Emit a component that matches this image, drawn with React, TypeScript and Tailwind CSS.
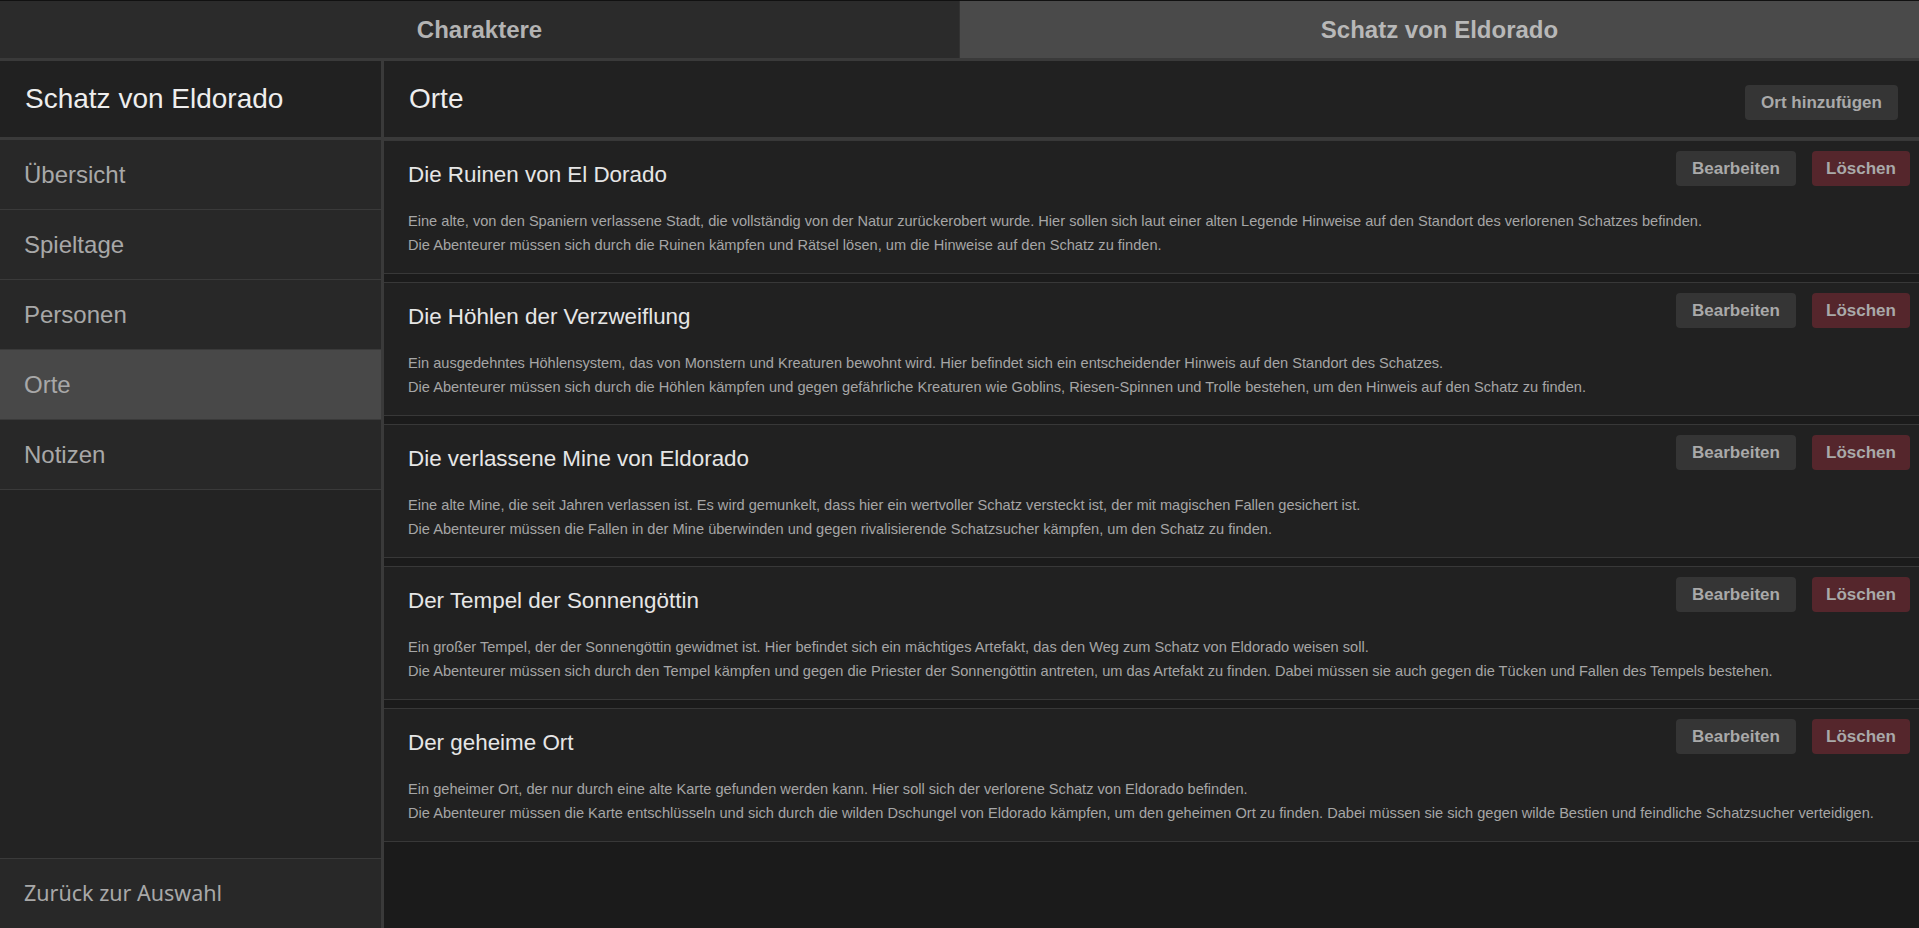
import React from "react";

type Place = {
  title: string;
  lines: string[];
};

const places: Place[] = [
  {
    title: "Die Ruinen von El Dorado",
    lines: [
      "Eine alte, von den Spaniern verlassene Stadt, die vollständig von der Natur zurückerobert wurde. Hier sollen sich laut einer alten Legende Hinweise auf den Standort des verlorenen Schatzes befinden.",
      "Die Abenteurer müssen sich durch die Ruinen kämpfen und Rätsel lösen, um die Hinweise auf den Schatz zu finden.",
    ],
  },
  {
    title: "Die Höhlen der Verzweiflung",
    lines: [
      "Ein ausgedehntes Höhlensystem, das von Monstern und Kreaturen bewohnt wird. Hier befindet sich ein entscheidender Hinweis auf den Standort des Schatzes.",
      "Die Abenteurer müssen sich durch die Höhlen kämpfen und gegen gefährliche Kreaturen wie Goblins, Riesen-Spinnen und Trolle bestehen, um den Hinweis auf den Schatz zu finden.",
    ],
  },
  {
    title: "Die verlassene Mine von Eldorado",
    lines: [
      "Eine alte Mine, die seit Jahren verlassen ist. Es wird gemunkelt, dass hier ein wertvoller Schatz versteckt ist, der mit magischen Fallen gesichert ist.",
      "Die Abenteurer müssen die Fallen in der Mine überwinden und gegen rivalisierende Schatzsucher kämpfen, um den Schatz zu finden.",
    ],
  },
  {
    title: "Der Tempel der Sonnengöttin",
    lines: [
      "Ein großer Tempel, der der Sonnengöttin gewidmet ist. Hier befindet sich ein mächtiges Artefakt, das den Weg zum Schatz von Eldorado weisen soll.",
      "Die Abenteurer müssen sich durch den Tempel kämpfen und gegen die Priester der Sonnengöttin antreten, um das Artefakt zu finden. Dabei müssen sie auch gegen die Tücken und Fallen des Tempels bestehen.",
    ],
  },
  {
    title: "Der geheime Ort",
    lines: [
      "Ein geheimer Ort, der nur durch eine alte Karte gefunden werden kann. Hier soll sich der verlorene Schatz von Eldorado befinden.",
      "Die Abenteurer müssen die Karte entschlüsseln und sich durch die wilden Dschungel von Eldorado kämpfen, um den geheimen Ort zu finden. Dabei müssen sie sich gegen wilde Bestien und feindliche Schatzsucher verteidigen.",
    ],
  },
];

const navItems = ["Übersicht", "Spieltage", "Personen", "Orte", "Notizen"];

function PlaceCard({ place }: { place: Place }) {
  return (
    <div className="border-y border-[#383838] bg-[#212121] pt-[10px] pr-[9px] pb-4 pl-6">
      <div className="flex items-start justify-between">
        <h3 className="mt-[11px] text-[22.4px] leading-[26px] text-[#e6e6e6]">
          {place.title}
        </h3>
        <div className="flex gap-4">
          <button className="h-[35px] w-[120px] rounded bg-[#353535] text-[17px] font-bold text-[#a9a9a9]">
            Bearbeiten
          </button>
          <button className="h-[35px] w-[98px] rounded bg-[#55262c] text-[17px] font-bold text-[#a9a9a9]">
            Löschen
          </button>
        </div>
      </div>
      <div className="mt-[21px] text-[14.6px] leading-6 text-[#a6a6a6]">
        {place.lines.map((line) => (
          <p key={line}>{line}</p>
        ))}
      </div>
    </div>
  );
}

export default function App() {
  return (
    <div className="flex h-screen flex-col overflow-hidden bg-[#1b1b1b] font-['Liberation_Sans',Arial,sans-serif]">
      <div className="flex h-[61px] shrink-0 border-t border-b-[3px] border-t-[#111] border-b-[#3a3a3a]">
        <div className="flex flex-1 items-center justify-center border-r border-[#333] bg-[#2b2b2b] text-[24px] font-bold text-[#b3b3b3]">
          Charaktere
        </div>
        <div className="flex flex-1 items-center justify-center bg-[#4a4a4a] text-[24px] font-bold text-[#b8b8b8]">
          Schatz von Eldorado
        </div>
      </div>

      <div className="flex min-h-0 flex-1">
        <aside className="flex w-[384px] shrink-0 flex-col border-r-[3px] border-[#3a3a3a] bg-[#232323]">
          <div className="flex h-[79px] shrink-0 items-center border-b-[3px] border-[#3a3a3a] bg-[#212121] px-[25px] text-[28px] text-[#eee]">
            Schatz von Eldorado
          </div>
          {navItems.map((item) => (
            <div
              key={item}
              className={
                item === "Orte"
                  ? "flex h-[70px] shrink-0 items-center border-b border-[#3a3a3a] bg-[#484848] pl-6 text-[24px] text-[#a8a8a8]"
                  : "flex h-[70px] shrink-0 items-center border-b border-[#3a3a3a] bg-[#282828] pl-6 text-[24px] text-[#a8a8a8]"
              }
            >
              {item}
            </div>
          ))}
          <div className="flex-1" />
          <div className="flex h-[70px] shrink-0 items-center border-t border-[#3a3a3a] bg-[#282828] px-6 font-['Noto_Sans',sans-serif] text-[21.5px] text-[#a8a8a8]">
            Zurück zur Auswahl
          </div>
        </aside>

        <main className="flex min-w-0 flex-1 flex-col">
          <div className="flex h-[79px] shrink-0 items-center justify-between border-b-[3px] border-[#3a3a3a] bg-[#212121] pr-[21px] pl-[25px]">
            <h2 className="text-[28px] text-[#eee]">Orte</h2>
            <button className="mt-[7px] h-[35px] w-[153px] rounded bg-[#353535] text-[17px] font-bold text-[#a9a9a9]">
              Ort hinzufügen
            </button>
          </div>
          <div className="flex flex-col gap-2">
            {places.map((place) => (
              <PlaceCard key={place.title} place={place} />
            ))}
          </div>
        </main>
      </div>
    </div>
  );
}
